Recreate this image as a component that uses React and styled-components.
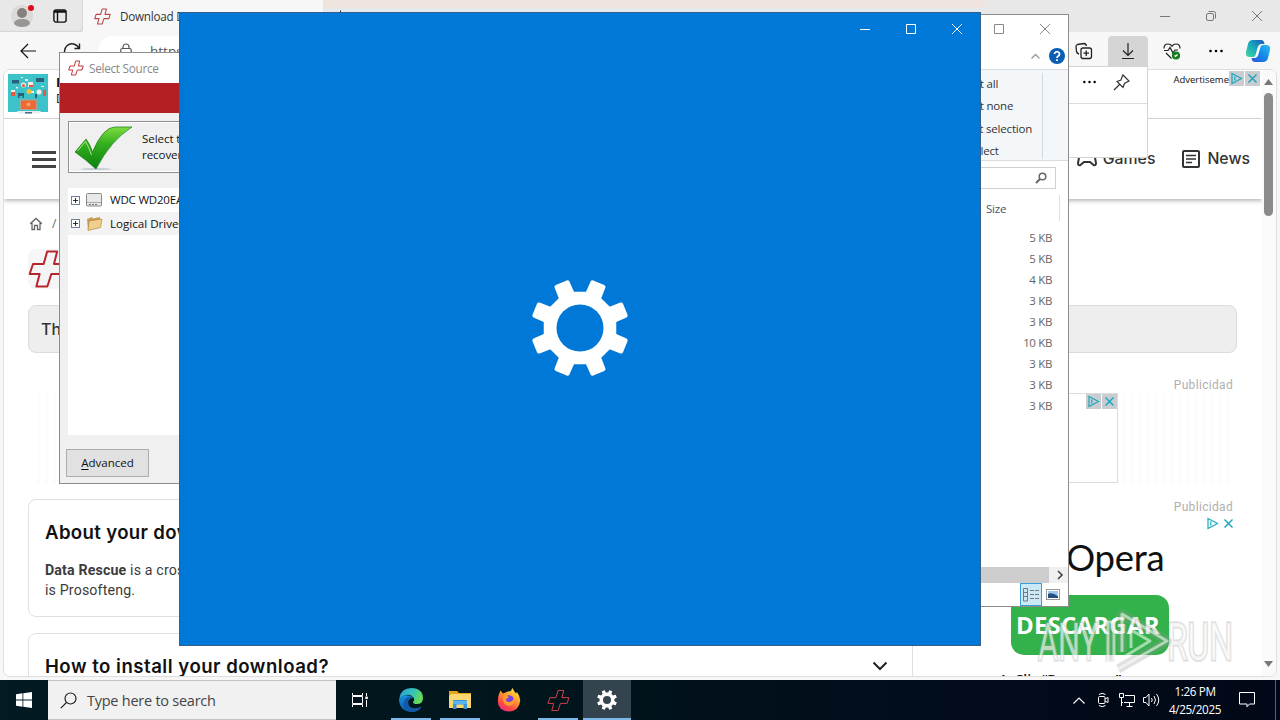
import React from "react";
import styled, { createGlobalStyle } from "styled-components";

const Global = createGlobalStyle`
  * { box-sizing: border-box; }
  body { margin: 0; font-family: "Open Sans", "Noto Sans", sans-serif; font-size: 12px; color: #111; }
  svg { display: block; flex: none; }
`;

const Desktop = styled.div`
  position: relative;
  width: 1280px;
  height: 720px;
  overflow: hidden;
  background: #f3f3f3;
`;

const Label = styled.span`
  flex: none;
  white-space: nowrap;
  font-family: ${(p) => p.$font || '"Open Sans"'}, sans-serif;
  font-size: ${(p) => p.$size || 12}px;
  line-height: ${(p) => p.$lh || 16}px;
  font-weight: ${(p) => p.$weight || 400};
  letter-spacing: ${(p) => p.$ls || 0}px;
  color: ${(p) => p.$color || "#111"};
  margin-left: ${(p) => p.$ml || 0}px;
`;

const Gap = styled.div`
  flex: ${(p) => (p.$w ? "none" : "1")};
  width: ${(p) => (p.$w ? p.$w + "px" : "auto")};
`;

/* ---------- Browser ---------- */
const Browser = styled.section`
  position: absolute;
  inset: 0 0 40px 0;
  display: flex;
  flex-direction: column;
  background: #f7f7f7;
`;
const TabStrip = styled.div`
  height: 32px;
  flex: none;
  display: flex;
  align-items: center;
  background: #e8e8e8;
`;
const StripLeft = styled.div`
  width: 83px;
  height: 32px;
  display: flex;
  align-items: center;
  padding-left: 11px;
  gap: 18px;
  border-bottom-right-radius: 4px;
  box-shadow: inset -1px -1px 1px #d5d5d5;
`;
const Tab = styled.div`
  width: 240px;
  height: 32px;
  display: flex;
  align-items: center;
  padding-left: 11px;
  gap: 9px;
  background: #f7f7f7;
`;
const StripFill = styled.div`
  width: 662px;
  height: 32px;
  display: flex;
  align-items: center;
  padding-left: 11px;
  background: linear-gradient(#efe4de 0 7px, #e4e9ee 9px 13px, #e8e8e8 14px);
`;
const CaptionButtons = styled.div`
  display: flex;
  width: ${(p) => p.$w || 138}px;
  svg { width: 46px; height: 16px; }
`;
const Toolbar = styled.div`
  height: 37px;
  flex: none;
  display: flex;
  align-items: flex-start;
  padding: 4px 0 0 18px;
`;
const ToolSlot = styled.div`
  flex: none;
  width: ${(p) => p.$w}px;
  height: 30px;
  display: flex;
  align-items: center;
  justify-content: center;
  border-radius: 4px 4px 0 0;
  background: ${(p) => (p.$active ? "#d5d5d5" : "transparent")};
`;
const AddressBar = styled.div`
  flex: 1;
  height: 30px;
  margin-left: 14px;
  display: flex;
  align-items: center;
  padding-left: 22px;
  gap: 18px;
  background: #fff;
  border-radius: 15px;
`;
const Viewport = styled.div`
  height: 608px;
  margin: 0 3px 0 3px;
  display: flex;
  border: 1px solid #dedede;
  border-radius: 7px;
  overflow: hidden;
  background: #fff;
`;
const PageBody = styled.main`
  width: 1258px;
  flex: none;
  display: flex;
  flex-direction: column;
`;
const AdBanner = styled.div`
  height: 49px;
  flex: none;
  display: flex;
  border-bottom: 1px solid #d8d8d8;
  padding: 4px 2px 0 4px;
`;
const BannerChoice = styled.div`
  margin-top: -3px;
`;
const AdText = styled.div`
  width: 330px;
  margin-left: 8px;
  display: flex;
  flex-direction: column;
`;
const SiteHeader = styled.header`
  height: 80px;
  flex: none;
  display: flex;
  align-items: center;
  padding: 0 12px 0 28px;
  box-shadow: 0 2px 4px rgba(0, 0, 0, 0.28);
`;
const Burger = styled.div`
  width: 24px;
  height: 17px;
  display: flex;
  flex-direction: column;
  justify-content: space-between;
  span { height: 3px; background: #444; }
`;
const Crumbs = styled.div`
  height: 16px;
  margin: 17px 0 0 26px;
  display: flex;
  align-items: center;
  gap: 10px;
`;
const AppLogo = styled.div`
  width: 40px;
  height: 40px;
  margin: 17px 0 0 24px;
  border-radius: 8px;
  background: #f6f6f6;
`;
const Notice = styled.div`
  width: 1209px;
  height: 48px;
  flex: none;
  margin: 16px 0 0 24px;
  padding: 0 12px;
  display: flex;
  align-items: center;
  border: 1px solid #dcdcdc;
  border-radius: 8px;
  background: #eee;
`;
const AdLabel = styled.div`
  width: 1229px;
  flex: none;
  display: flex;
  justify-content: flex-end;
  padding-top: 24px;
`;
const WideAd = styled.div`
  height: 90px;
  flex: none;
  display: flex;
  padding-left: 28px;
`;
const Stripes = styled.div`
  width: ${(p) => p.$w}px;
  background: repeating-linear-gradient(90deg, #fff 0 5px, #fcfcfc 5px 8px);
`;
const AdFrame = styled.div`
  width: 983px;
  margin-left: 4px;
  display: flex;
  justify-content: flex-end;
  border: 1px solid #dcdcdc;
`;
const Choice = styled.div`
  height: 15px;
  display: flex;
  gap: 1px;
  svg { width: 15px; height: 15px; background: ${(p) => (p.$plain ? "transparent" : "#c9ccd0")}; }
`;
const Columns = styled.div`
  display: flex;
  margin-top: 16px;
  padding-left: 24px;
`;
const LeftCol = styled.div`
  width: 885px;
  display: flex;
  flex-direction: column;
  gap: 16px;
`;
const Card = styled.article`
  height: 118px;
  padding: 20px 16px;
  border: 1px solid #e0e0e0;
  border-radius: 8px;
`;
const CardHead = styled.div`
  display: flex;
  align-items: center;
  justify-content: space-between;
  padding-right: 8px;
  height: 24px;
`;
const Paragraph = styled.div`
  display: flex;
  flex-direction: column;
  padding-top: 16px;
`;
const RightCol = styled.aside`
  width: 324px;
  display: flex;
  flex-direction: column;
`;
const AdLine = styled.div`
  width: ${(p) => p.$w || 320}px;
  display: flex;
  justify-content: flex-end;
`;
const ChoiceLine = styled(AdLine)`
  padding-top: 1px;
`;
const Brand = styled.div`
  height: 52px;
  padding: 0 0 0 153px;
`;
const Download = styled.div`
  width: 158px;
  height: 60px;
  margin: 12px 0 0 98px;
  padding-left: 5px;
  display: flex;
  align-items: center;
  border-radius: 13px;
  background: #33b14a;
`;
const Steps = styled.div`
  margin: 15px 0 0 86px;
`;
const Scrollbar = styled.div`
  width: 14px;
  flex: none;
  display: flex;
  flex-direction: column;
  align-items: center;
  padding: 9px 1px 9px 0;
  background: #fafafa;
`;
const Thumb = styled.div`
  width: 9px;
  height: 123px;
  margin: 8px 0 auto;
  border-radius: 5px;
  background: #8b8b8b;
`;
const Flyout = styled.div`
  position: absolute;
  left: 1040px;
  top: 66px;
  width: 108px;
  height: 92px;
  background: #fff;
  border: 1px solid #d4d4d4;
`;
const FlyoutHead = styled.div`
  height: 37px;
  display: flex;
  align-items: center;
  justify-content: flex-end;
  gap: 16px;
  padding-right: 17px;
  padding-bottom: 6px;
  border-bottom: 1px solid #ddd;
`;

/* ---------- Explorer ---------- */
const Explorer = styled.section`
  position: absolute;
  left: 900px;
  top: 14px;
  width: 169px;
  height: 593px;
  display: flex;
  flex-direction: column;
  border: 1px solid #8c8c8c;
  background: #fff;
`;
const ExTitle = styled.div`
  height: 28px;
  flex: none;
  display: flex;
  align-items: center;
  justify-content: flex-end;
`;
const ExMenu = styled.div`
  height: 26px;
  flex: none;
  display: flex;
  align-items: center;
  justify-content: flex-end;
  gap: 9px;
  padding-right: 3px;
`;
const Ribbon = styled.div`
  height: 92px;
  flex: none;
  display: flex;
  background: #f4f7fa;
  border-top: 1px solid #d9dde1;
  border-bottom: 1px solid #d9dde1;
`;
const RibbonGroup = styled.div`
  width: 142px;
  margin: 3px 0 1px;
  padding: 3px 0 0 52px;
  display: flex;
  flex-direction: column;
  justify-content: space-between;
  border-right: 1px solid #d3d9de;
`;
const SearchBox = styled.div`
  width: 155px;
  height: 22px;
  flex: none;
  margin-top: 6px;
  display: flex;
  align-items: center;
  justify-content: flex-end;
  padding-right: 8px;
  border: 1px solid #d0d0d0;
`;
const SizeHead = styled.div`
  width: 159px;
  height: 26px;
  flex: none;
  margin: 6px 0 6px;
  padding: 2px 0 0 85px;
  display: flex;
  align-items: center;
  border-right: 1px solid #e0e0e0;
`;
const SizeList = styled.div`
  flex: 1;
  display: flex;
  flex-direction: column;
  align-items: flex-end;
  padding-right: 16px;
`;
const ExScroll = styled.div`
  height: 16px;
  display: flex;
  background: #f0f0f0;
  div { width: 148px; background: #cdcdcd; }
  svg { margin: 3px 0 0 7px; }
`;
const ExStatus = styled.div`
  height: 23px;
  display: flex;
  justify-content: flex-end;
  padding-right: 5px;
`;
const ViewButton = styled.div`
  width: ${(p) => (p.$on ? 22 : 21)}px;
  height: 23px;
  display: flex;
  align-items: center;
  justify-content: center;
  border: 1px solid ${(p) => (p.$on ? "#3b9fd6" : "transparent")};
  background: ${(p) => (p.$on ? "#cbe8f7" : "transparent")};
`;

/* ---------- Select Source dialog ---------- */
const Dialog = styled.section`
  position: absolute;
  left: 59px;
  top: 52px;
  width: 300px;
  height: 432px;
  display: flex;
  flex-direction: column;
  border: 1px solid #8c8c8c;
  background: #f0f0f0;
`;
const DialogTitle = styled.div`
  height: 30px;
  flex: none;
  display: flex;
  align-items: center;
  gap: 5px;
  padding-left: 8px;
  background: #fff;
`;
const RedBand = styled.div`
  height: 30px;
  flex: none;
  background: #b41f24;
`;
const Instruction = styled.div`
  height: 52px;
  margin: 8px 0 0 8px;
  flex: none;
  display: flex;
  align-items: center;
  gap: 8px;
  padding-left: 6px;
  border: 1px solid #8f8f8f;
  box-shadow: inset 1px 1px 0 #fff, inset 0 -1px 0 #fff;
`;
const TwoLines = styled.div`
  display: flex;
  flex-direction: column;
`;
const Tree = styled.div`
  margin: 15px 0 0 8px;
  height: 247px;
  flex: none;
  background: #fff;
`;
const TreeRow = styled.div`
  height: ${(p) => (p.$alt ? 23 : 24)}px;
  display: flex;
  align-items: center;
  padding-left: 3px;
  background: ${(p) => (p.$alt ? "#f3f3f3" : "#fff")};
`;
const PushButton = styled.div`
  width: 83px;
  height: 28px;
  margin: 14px 0 0 6px;
  display: flex;
  align-items: center;
  justify-content: center;
  border: 1px solid #adadad;
  background: #e1e1e1;
  u { text-underline-offset: 2px; }
`;

/* ---------- Settings splash ---------- */
const Splash = styled.section`
  position: absolute;
  left: 179px;
  top: 12px;
  width: 802px;
  height: 634px;
  display: flex;
  flex-direction: column;
  border: 1px solid #35608c;
  background: #0078d7;
`;
const SplashTitle = styled.div`
  height: 32px;
  display: flex;
  align-items: center;
  justify-content: flex-end;
`;
const SplashBody = styled.div`
  flex: 1;
  display: flex;
  align-items: center;
  justify-content: center;
  padding-bottom: 34px;
`;
const Watermark = styled.svg`
  position: absolute;
  left: 1030px;
  top: 602px;
`;

/* ---------- Taskbar ---------- */
const Taskbar = styled.footer`
  position: absolute;
  left: 0;
  bottom: 0;
  width: 1280px;
  height: 40px;
  display: flex;
  background: linear-gradient(90deg, #021a21 0, #01151c 40%, #020d1b 70%, #020817);
`;
const StartSlot = styled.div`
  width: 48px;
  display: flex;
  align-items: center;
  justify-content: center;
`;
const TaskSearch = styled.div`
  width: 288px;
  display: flex;
  align-items: center;
  padding-left: 12px;
  gap: 10px;
  border: 1px solid #c4c4c4;
  border-width: 1px 0;
  background: #f1f1f1;
`;
const TaskSearchText = styled.div`
  padding-top: 2px;
`;
const TaskSlot = styled.div`
  width: 48px;
  margin-right: 1px;
  padding-bottom: ${(p) => (p.$run ? 0 : 2)}px;
  padding-top: 2px;
  display: flex;
  flex-direction: column;
  align-items: center;
  background: ${(p) => (p.$active ? "#34444e" : "transparent")};
`;
const TaskIcon = styled.div`
  flex: 1;
  display: flex;
  align-items: center;
`;
const Underline = styled.div`
  width: ${(p) => (p.$wide ? 48 : 40)}px;
  height: 2px;
  background: #7cb9ea;
`;
const Tray = styled.div`
  display: grid;
  grid-template-columns: repeat(4, 24px);
  align-items: center;
  justify-items: center;
`;
const Clock = styled.div`
  width: 64px;
  display: flex;
  flex-direction: column;
  align-items: center;
  padding-top: 2px;
`;
const Notif = styled.div`
  width: 49px;
  margin-right: 4px;
  padding-right: 9px;
  display: flex;
  align-items: center;
  justify-content: center;
  border-right: 1px solid #59616b;
`;

/* ---------- Icons ---------- */
const CROSS = "M11.5 1.5H17.5L15.6 9H22.8L21 15H14L11.6 22.5H5L7 15H1L3 9H9.4Z";
const Cross = ({ s = 24, c = "#c5353a", w = 1.2, fill = "none" }) => (
  <svg width={s} height={s} viewBox="0 0 24 24" fill={fill} stroke={c} strokeWidth={w} strokeLinejoin="round"><path d={CROSS} /></svg>
);
const Gear = ({ s, hole = 24 }) => (
  <svg width={s} height={s} viewBox="-50 -50 100 100">
    <defs>
      <mask id={"hole" + s}><rect x="-50" y="-50" width="100" height="100" fill="#fff" /><circle r={hole} fill="#000" /></mask>
    </defs>
    <g fill="#fff" mask={`url(#hole${s})`}>
      <path d="M-15-37H15L37-15V15L15 37H-15L-37 15V-15Z" />
      {[0, 1, 2, 3, 4, 5, 6, 7].map((i) => (
        <path key={i} transform={`rotate(${22.5 + 45 * i})`} d="M-8.6-30L-8.2-48Q-8-50-6-50H6Q8-50 8.2-48L8.6-30Z" />
      ))}
    </g>
  </svg>
);
const Min = ({ c, w = 10 }) => <svg viewBox="0 0 46 16" fill="none" stroke={c}><path d={`M${23 - w / 2} 8.5h${w}`} /></svg>;
const Max = ({ c }) => <svg viewBox="0 0 46 16" fill="none" stroke={c}><path d="M18.5 3.5h9v9h-9z" /></svg>;
const Close = ({ c }) => <svg viewBox="0 0 46 16" fill="none" stroke={c}><path d="M18 3l10 10M28 3L18 13" /></svg>;
const Restore = ({ c }) => (
  <svg viewBox="0 0 46 16" fill="none" stroke={c}><rect x="18.500" y="5.500" width="7" height="7" rx="1.500" /><path d="M20.500 3.500h5a2 2 0 0 1 2 2v5" /></svg>
);
const PlayMark = () => (
  <svg viewBox="0 0 15 15" fill="none" stroke="#1ba8bd" strokeWidth="1.200"><path d="M3 2.500L12.500 7.500L3 12.500ZM5.800 5.500v4" /></svg>
);
const XMark = () => <svg viewBox="0 0 15 15" fill="none" stroke="#1ba8bd" strokeWidth="1.500"><path d="M3.500 3.500l8 8M11.500 3.500l-8 8" /></svg>;
const Dots = ({ s = 16 }) => <svg width={s} height="4" viewBox="0 0 16 4"><circle cx="2.500" cy="2" r="1.300" /><circle cx="8" cy="2" r="1.300" /><circle cx="13.500" cy="2" r="1.300" /></svg>;
const Plus = () => (
  <svg width="9" height="9" viewBox="0 0 9 9" fill="#fff" stroke="#6f7fa0"><rect x=".5" y=".5" width="8" height="8" /><path stroke="#222c55" d="M2 4.500h5M4.500 2v5" /></svg>
);
const Thumbnail = () => (
  <svg width="40" height="40" viewBox="0 0 40 40">
    <rect width="40" height="38" fill="#3cc3c9" />
    <g fill="#2b6079"><rect x="4" y="6" width="7" height="3.500" /><rect x="28" y="4" width="8" height="4" /><path d="M10 19h6v5h-1.500v-2h-3v2H10z" /><rect x="27" y="20" width="2" height="4" /></g>
    <g fill="#f4efe2"><rect x="20" y="8" width="5" height="5" /><circle cx="15.500" cy="11" r="2.500" /><rect x="3" y="16" width="4" height="6" /><circle cx="31" cy="18" r="2.500" /><path d="M17 5h3v2h-3zM23 17h3v2h-3zM13 3h2v1h-2zM33 12h3v1h-3zM8 13h2v1.500H8z" /></g>
    <g fill="#e8573e"><circle cx="15.500" cy="11.500" r="1.500" /><rect x="3" y="18" width="4" height="4" /><rect x="35" y="16" width="3" height="6" /><rect x="21" y="11" width="4" height="2" /></g>
    <circle cx="21" cy="17.500" r="2.500" fill="#f5bf37" />
    <rect x="12" y="25.500" width="17" height="10.500" rx="1" fill="#b5a48f" /><rect x="13" y="26.500" width="15" height="8.500" fill="#ee6a35" /><circle cx="20.500" cy="30.500" r="2" fill="#f6a06f" />
    <path d="M9 37h24l-2 2.500H11z" fill="#e8ecee" /><path d="M17 38h7v1.500h-7z" fill="#456f8a" />
  </svg>
);
const Check = () => (
  <svg width="59" height="48" viewBox="0 0 59 48">
    <defs><linearGradient id="ck" x1="0" y1="0" x2="0" y2="1"><stop offset="0" stopColor="#7fdb3f" /><stop offset=".4" stopColor="#34b01f" /><stop offset="1" stopColor="#0a7f12" /></linearGradient></defs>
    <ellipse cx="21" cy="46" rx="15" ry="1" fill="#c4cdd4" />
    <path d="M0 29L11 16Q15 21 17.500 29Q28 4 40 4H57Q36 17 21 46Q10 36 0 29Z" fill="url(#ck)" stroke="#157c17" strokeWidth=".7" />
    <path d="M2.500 28L10.500 18.500Q13.500 23 16.500 32" fill="none" stroke="#a6e884" strokeWidth="1" />
  </svg>
);
const Copilot = () => (
  <svg width="26" height="24" viewBox="0 0 26 24">
    <defs>
      <linearGradient id="cpa" x1="0" y1="1" x2="1" y2="0"><stop offset="0" stopColor="#42d99c" /><stop offset=".5" stopColor="#18a7bd" /><stop offset="1" stopColor="#1758bd" /></linearGradient>
      <linearGradient id="cpb" x1="0" y1="1" x2="1" y2="0"><stop offset="0" stopColor="#2c56d8" /><stop offset=".5" stopColor="#1588ea" /><stop offset="1" stopColor="#2cc0f0" /></linearGradient>
    </defs>
    <path d="M8 1h8q3 0 3.500 4h-3q-3 0-4 4l-2 7q-.5 2-2.500 2H5q-5 0-4-5l2-8Q4 1 8 1z" fill="url(#cpa)" />
    <path d="M18 23h-8q-3 0-3.500-4h3q3 0 4-4l2-7q.5-2 2.500-2h3q5 0 4 5l-2 8q-1 4-5 4z" fill="url(#cpb)" />
  </svg>
);
const EdgeIcon = () => (
  <svg width="24" height="24" viewBox="0 0 24 24">
    <defs>
      <linearGradient id="e1" x1="0" y1="0" x2="1" y2=".4"><stop offset="0" stopColor="#269fe0" /><stop offset=".6" stopColor="#37c3b7" /><stop offset="1" stopColor="#68db55" /></linearGradient>
      <linearGradient id="e2" x1="0" y1="0" x2="0" y2="1"><stop offset="0" stopColor="#1b8edb" /><stop offset="1" stopColor="#0b5cb5" /></linearGradient>
    </defs>
    <path d="M.5 10Q2 0 12.500 0Q24 .5 24 10.500Q23.500 16 18 16Q14 16 14 14Q16 12 14.500 9.500Q12 6 7 7Q2 8 .5 12Z" fill="url(#e1)" />
    <path d="M0 12Q1 7.500 6.500 7.200Q12 7 14.500 10Q10 9.500 9 14Q9 20 16 20.500Q19.500 20.500 22.500 18.500Q19 24 12.500 24Q1 23.500 0 12Z" fill="url(#e2)" />
    <path d="M5 20Q3 10 11 8.500Q14 9 14.500 10Q9.500 9 9 14Q9 20 16 20.500Q19.500 20.500 22.500 18.500Q20 23.500 13 24Q8 23.500 5 20Z" fill="#1259a6" />
  </svg>
);
const FolderIcon = () => (
  <svg width="22" height="20" viewBox="0 0 22 20">
    <path d="M0 1h8l2 2h12v15H0z" fill="#e8a317" /><path d="M2 4h20v14H0V6z" fill="#fbd670" />
    <path d="M4 19v-8q0-1 1-1h12q1 0 1 1v8h-3.500v-4.500h-7V19z" fill="#3a95d8" /><path d="M4 11h14v3H4z" fill="#59b5ee" />
  </svg>
);
const Firefox = () => (
  <svg width="24" height="24" viewBox="0 0 24 24">
    <defs><linearGradient id="ff" x1=".8" y1="0" x2=".2" y2="1"><stop offset="0" stopColor="#fff04a" /><stop offset=".4" stopColor="#ff9b28" /><stop offset=".75" stopColor="#ff4548" /><stop offset="1" stopColor="#e92a8c" /></linearGradient></defs>
    <path d="M2 6L3.500 2.500L6 5.500L8.500 4.500Q12 3 14 3Q14.500 1 15.500 0Q17 3.500 19 5.500L20 4Q23.500 9 23.200 13Q22 23 12 23.500Q1 23 .8 13Q.8 9 2 6Z" fill="url(#ff)" />
    <circle cx="12" cy="12.500" r="5.200" fill="#7542e5" />
    <path d="M6 7Q10 6 12 9.500L9 11Q9 14.500 13 14Q17 13 16.500 9Q19 13 16.500 16Q12 20 7.500 16Q5 12 6 7Z" fill="#ff9a2b" />
  </svg>
);

const sizes = ["5 KB", "5 KB", "4 KB", "3 KB", "3 KB", "10 KB", "3 KB", "3 KB", "3 KB"];
const Publicidad = () => <Label $color="#b0b0b0" $font="Roboto" $size={12} $ls={0.32}>Publicidad</Label>;

const BrowserWindow = () => (
  <Browser>
    <TabStrip>
      <StripLeft>
        <svg width="24" height="24" viewBox="0 0 24 24"><circle cx="11" cy="12" r="11" fill="#dcdad8" /><circle cx="11" cy="9" r="5" fill="#85817f" /><path d="M3 20q0-5 8-5t8 5q-3 3-8 3t-8-3z" fill="#999593" /><circle cx="20" cy="4" r="3" fill="#e00b1c" /></svg>
        <svg width="14" height="14" viewBox="0 0 14 14" fill="none" stroke="#111" strokeWidth="1.400"><rect x=".9" y=".9" width="12.200" height="12.200" rx="2" /><path strokeWidth="2.500" d="M1 2.500h12" /><path d="M4.500 3v10" /></svg>
      </StripLeft>
      <Tab><Cross s={17} w={1.5} c="#b5484b" /><Label $ls={-0.25} $color="#333" $size={11.7}>Download Data Rescue 6.0.6</Label></Tab>
      <StripFill><svg width="13" height="13" viewBox="0 0 13 13" stroke="#222"><path d="M.5 6.500h12M6.500.5v12" /></svg></StripFill>
      <Gap />
      <CaptionButtons><Min c="#777" /><Restore c="#777" /><Close c="#777" /></CaptionButtons>
    </TabStrip>
    <Toolbar>
      <ToolSlot $w={20}><svg width="18" height="16" viewBox="0 0 18 16" fill="none" stroke="#111" strokeWidth="1.200"><path d="M17 8H2M9 1L2 8l7 7" /></svg></ToolSlot>
      <Gap $w={22} />
      <ToolSlot $w={24}><svg width="18" height="18" viewBox="0 0 18 18" fill="none" stroke="#222" strokeWidth="1.400"><path d="M16 6.500A7.500 7.500 0 1 0 16.500 10M16.500 1.500v5h-5" /></svg></ToolSlot>
      <AddressBar>
        <svg width="12" height="16" viewBox="0 0 12 16" fill="none" stroke="#555" strokeWidth="1.200"><rect x=".8" y="5.500" width="10.400" height="9.500" rx="1.500" /><path d="M3 5.500V4a3 3 0 0 1 6 0v1.500" /><circle cx="6" cy="10" r=".5" /></svg>
        <Label $size={13.5} $color="#555">https://</Label>
      </AddressBar>
      <ToolSlot $w={48}><svg width="18" height="18" viewBox="0 0 18 18" fill="none" stroke="#222" strokeWidth="1.300"><rect x="6" y="6" width="10.500" height="10.500" rx="2" /><path d="M11.200 8.500v5.500M8.500 11.200H14M4 12Q2 11.500 1.500 9.500L1 4.500Q1 3 2.500 2.500L9 1.500Q11 1.500 11.500 4" /></svg></ToolSlot>
      <ToolSlot $w={40} $active><svg width="14" height="18" viewBox="0 0 14 18" fill="none" stroke="#222" strokeWidth="1.200"><path d="M7 1v12M2 8.500l5 5 5-5M1 16.500h12" /></svg></ToolSlot>
      <ToolSlot $w={48}><svg width="18" height="18" viewBox="0 0 18 18" fill="none" stroke="#222" strokeWidth="1.200"><path d="M1 6.500Q1 2 5 2q2.500 0 4 2.200Q10.500 2 13 2q4 0 4 4.500M1 8.500h4l2-3 3 5.500 2-3h3M3 11l5.500 5.500" /><circle cx="13" cy="13.500" r="3.500" fill="#14801b" stroke="#14801b" /><path stroke="#fff" d="M11.500 13.500l1 1 2-2" /></svg></ToolSlot>
      <ToolSlot $w={40}><Dots /></ToolSlot>
      <ToolSlot $w={44}><Copilot /></ToolSlot>
    </Toolbar>
    <Viewport>
      <PageBody>
        <AdBanner>
          <Thumbnail />
          <AdText>
            <Label $weight={700} $size={13}>Data Rescue</Label>
            <Label $size={12} $lh={17}>Download</Label>
          </AdText>
          <Gap />
          <Label $size={9.5} $lh={12}>Advertiseme</Label>
          <BannerChoice><Choice><PlayMark /><XMark /></Choice></BannerChoice>
        </AdBanner>
        <SiteHeader>
          <Burger><span /><span /><span /></Burger>
          <Gap />
          <svg width="20" height="16" viewBox="0 0 20 16" fill="none" stroke="#333" strokeWidth="2"><path d="M5 2h10q2 0 2.500 2L19 12q0 3-2.500 2L13 11H7l-3.500 3Q1 15 1 12L2.500 4Q3 2 5 2z" /></svg>
          <Label $font="Inter" $size={15.8} $ml={6} $lh={20} $color="#333" $weight={450}>Games</Label>
          <Gap $w={27} />
          <svg width="18" height="18" viewBox="0 0 18 18" fill="none" stroke="#333" strokeWidth="2"><rect x="1" y="1" width="16" height="16" rx="1" /><path strokeWidth="1.700" d="M4 5.500h10M4 9h10M4 12.500h6" /></svg>
          <Label $font="Inter" $size={15.8} $ml={7} $lh={20} $color="#333" $weight={450}>News</Label>
        </SiteHeader>
        <Crumbs>
          <svg width="12" height="14" viewBox="0 0 12 14" fill="none" stroke="#666" strokeWidth="1.300"><path d="M0 7l6-5.500L12 7M2 6v6.500h2.500V8.500h3v4H10V6" /></svg>
          <Label $color="#666">/</Label>
        </Crumbs>
        <AppLogo><Cross s={40} c="#b5262c" w={1.2} fill="#f4f4f4" /></AppLogo>
        <Notice><Label $font="Inter" $size={16} $weight={500} $color="#333">This</Label></Notice>
        <AdLabel><Publicidad /></AdLabel>
        <WideAd>
          <Stripes $w={99} />
          <AdFrame><Choice><PlayMark /><XMark /></Choice></AdFrame>
          <Stripes $w={115} />
        </WideAd>
        <Columns>
          <LeftCol>
            <Card>
              <CardHead><Label $font="Inter" $size={18.6} $lh={24} $weight={600} $ls={0.35}>About your download</Label></CardHead>
              <Paragraph>
                <Label $font="Roboto" $size={14.2} $lh={20} $color="#3c3c3c" $ls={0.15}><b>Data Rescue</b> is a cross-platform</Label>
                <Label $font="Roboto" $size={14.2} $lh={20} $color="#3c3c3c" $ls={0.15}>is Prosofteng.</Label>
              </Paragraph>
            </Card>
            <Card>
              <CardHead>
                <Label $font="Inter" $size={18.6} $lh={24} $weight={600} $ls={0.5}>How to install your download?</Label>
                <svg width="16" height="10" viewBox="0 0 16 10" fill="none" stroke="#222" strokeWidth="2"><path d="M1.500 1.500L8 8l6.500-6.500" /></svg>
              </CardHead>
            </Card>
          </LeftCol>
          <RightCol>
            <AdLine><Publicidad /></AdLine>
            <ChoiceLine $w={323}><Choice $plain><PlayMark /><XMark /></Choice></ChoiceLine>
            <Brand><Label $font="Lato" $size={36.5} $lh={52} $ls={-0.3}>Opera</Label></Brand>
            <Download><Label $size={24} $lh={30} $weight={700} $ls={0.2} $color="#fff">DESCARGAR</Label></Download>
            <Steps><Label $size={14} $lh={20} $weight={600}>1. Clic “Descargar”</Label></Steps>
          </RightCol>
        </Columns>
      </PageBody>
      <Scrollbar>
        <svg width="9" height="6" viewBox="0 0 9 6" fill="#777"><path d="M0 6L4.500 0L9 6z" /></svg>
        <Thumb />
        <svg width="9" height="6" viewBox="0 0 9 6" fill="#777"><path d="M0 0h9L4.500 6z" /></svg>
      </Scrollbar>
    </Viewport>
    <Flyout>
      <FlyoutHead>
        <Dots s={15} />
        <svg width="17" height="17" viewBox="0 0 17 17" fill="none" stroke="#333" strokeWidth="1.200"><path d="M10 1l6 6-2 1-2.500 1.500-1.500 4-6-6 4-1.500L9 3zM6.500 10.500L1 16" /></svg>
      </FlyoutHead>
    </Flyout>
  </Browser>
);

const ExplorerWindow = () => (
  <Explorer>
    <ExTitle><CaptionButtons $w={92}><Max c="#888" /><Close c="#888" /></CaptionButtons></ExTitle>
    <ExMenu>
      <svg width="9" height="6" viewBox="0 0 9 6" fill="none" stroke="#999" strokeWidth="1.300"><path d="M.5 5.500l4-4 4 4" /></svg>
      <svg width="16" height="16" viewBox="0 0 16 16"><circle cx="8" cy="8" r="8" fill="#0b5db6" /><path d="M5.500 6a2.500 2.300 0 1 1 3.800 2Q8 8.700 8 10M8 11.200v1.800" fill="none" stroke="#fff" strokeWidth="1.800" /></svg>
    </ExMenu>
    <Ribbon>
      <RibbonGroup>
        {["Select all", "Select none", "Invert selection", "Select"].map((t, i) => <Label key={i} $size={11.5} $ls={-0.18} $ml={i === 3 ? 15 : 0} $color="#333">{t}</Label>)}
      </RibbonGroup>
    </Ribbon>
    <SearchBox><svg width="12" height="12" viewBox="0 0 12 12" fill="none" stroke="#666" strokeWidth="1.500"><circle cx="7.500" cy="4.500" r="3.300" /><path strokeWidth="2" d="M5 7L1 11" /></svg></SearchBox>
    <SizeHead><Label $size={11.5} $ls={-0.2} $color="#44546a">Size</Label></SizeHead>
    <SizeList>{sizes.map((t, i) => <Label key={i} $size={11.5} $lh={21} $ls={-0.35} $color="#666">{t}</Label>)}</SizeList>
    <ExScroll><div /><svg width="8" height="10" viewBox="0 0 8 10" fill="none" stroke="#444" strokeWidth="1.600"><path d="M2 1l4 4-4 4" /></svg></ExScroll>
    <ExStatus>
      <ViewButton $on><svg width="16" height="14" viewBox="0 0 16 14" fill="none" stroke="#777"><path d="M.5.5h4v12.500h-4zM.5 4.500h4M.5 8.500h4M7 2.500h4M12 2.500h4M7 6.500h4M12 6.500h4M7 10.500h4M12 10.500h4" /></svg></ViewButton>
      <ViewButton><svg width="14" height="11" viewBox="0 0 14 11"><rect x=".5" y=".5" width="13" height="10" fill="#fff" stroke="#999" /><path d="M2 2h10v4H2z" fill="#9cc8f0" /><path d="M2 5q4-2 10 2v2H2z" fill="#24507c" /></svg></ViewButton>
    </ExStatus>
  </Explorer>
);

const SourceDialog = () => (
  <Dialog>
    <DialogTitle><Cross s={16} w={1.5} /><Label $color="#888" $size={11.8} $ls={-0.3}>Select Source</Label></DialogTitle>
    <RedBand />
    <Instruction>
      <Check />
      <TwoLines><Label $size={11.5} $ls={-0.05}>Select the location to</Label><Label $size={11.5} $ls={-0.05}>recover data from</Label></TwoLines>
    </Instruction>
    <Tree>
      <TreeRow>
        <Plus /><Gap $w={6} />
        <svg width="16" height="14" viewBox="0 0 16 14"><rect x=".5" y=".5" width="15" height="12.500" rx="1" fill="#e8e8e8" stroke="#888" /><path d="M1 9.500h14" stroke="#aaa" /><path d="M3 11.500h8" stroke="#777" strokeDasharray="2 1" /></svg>
        <Label $ml={8} $size={11.5} $ls={-0.2}>WDC WD20EARS</Label>
      </TreeRow>
      <TreeRow $alt>
        <Plus /><Gap $w={6} />
        <svg width="17" height="15" viewBox="0 0 17 15"><path d="M1 3l5-2 1 1.500L14 1v10L2 14z" fill="#c99a50" /><path d="M3 5l13-2-1.500 8.500L2 14.500z" fill="#f0cf8d" stroke="#b58a45" strokeWidth=".7" /></svg>
        <Label $ml={7} $size={11.6}>Logical Drives</Label>
      </TreeRow>
    </Tree>
    <PushButton><Label $size={11.5}><u>A</u>dvanced</Label></PushButton>
  </Dialog>
);

const SettingsSplash = () => (
  <Splash>
    <SplashTitle><CaptionButtons><Min c="#fff" /><Max c="#fff" /><Close c="#fff" /></CaptionButtons></SplashTitle>
    <SplashBody><Gear s={98} /></SplashBody>
  </Splash>
);

const AnyRun = () => (
  <Watermark width="214" height="78" viewBox="0 0 214 78">
    <g fill="#fff" fillOpacity=".6" stroke="#a8a8a8" strokeOpacity=".38" strokeWidth="3" paintOrder="stroke" fontFamily="Roboto, sans-serif" fontSize="51">
      <text x="8" y="58" textLength="60" lengthAdjust="spacingAndGlyphs">ANY</text>
      <text x="137" y="58" textLength="66" lengthAdjust="spacingAndGlyphs">RUN</text>
    </g>
    <g fill="none" strokeLinejoin="round">
      <path d="M80 20V60M92 50V12L137 39L88 67" stroke="#999" strokeOpacity=".3" strokeWidth="9" />
      <path d="M92 50V12L137 39L88 67L84 61L120 39L101 28V46M78 20V60H84V20Z" stroke="#fff" strokeOpacity=".55" strokeWidth="3" />
    </g>
  </Watermark>
);

const Task = ({ children, run, active }) => (
  <TaskSlot $run={run} $active={active}><TaskIcon>{children}</TaskIcon>{run && <Underline $wide={active} />}</TaskSlot>
);

const TaskbarRow = () => (
  <Taskbar>
    <StartSlot><svg width="16" height="16" viewBox="0 0 16 16" fill="#fff"><path d="M0 2.300L6.500 1.300V7.600H0zM7.300 1.200L16 0V7.600H7.300zM0 8.400H6.500V14.700L0 13.700zM7.300 8.400H16V16L7.300 14.800z" /></svg></StartSlot>
    <TaskSearch>
      <svg width="17" height="17" viewBox="0 0 17 17" fill="none" stroke="#222" strokeWidth="1.200"><circle cx="10.500" cy="6.500" r="5.500" /><path d="M6.500 10.500L.8 16.200" /></svg>
      <TaskSearchText><Label $size={14.5} $lh={20} $ls={-0.25} $color="#444">Type here to search</Label></TaskSearchText>
    </TaskSearch>
    <Task><svg width="16" height="16" viewBox="0 0 16 16" fill="none" stroke="#fff"><path d="M.5 1v2.500h10V1M.5 15v-2.500h10V15M.5 4.500h10v7H.5zM14.500 1v3M14.500 8v7" /><path strokeWidth="2.500" d="M13.300 5.800h2.500" /></svg></Task>
    <Gap $w={2} />
    <Task run><EdgeIcon /></Task>
    <Task run><FolderIcon /></Task>
    <Task><Firefox /></Task>
    <Task run><Cross s={23} w={1} c="#d5454b" /></Task>
    <Task run active><Gear s={20} hole={20} /></Task>
    <Gap />
    <Tray>
      <svg width="12" height="7" viewBox="0 0 12 7" fill="none" stroke="#fff" strokeWidth="1.200"><path d="M.5 6.500L6 1l5.500 5.500" /></svg>
      <svg width="12" height="16" viewBox="0 0 12 16" fill="none" stroke="#fff"><rect x="1.500" y="4.500" width="6.500" height="7" rx="1" /><path d="M8 7l3-1.500v5L8 9M2 2.500Q5 0 8.500 2.500M2 13.500Q5 16 8.500 13.500" /></svg>
      <svg width="16" height="14" viewBox="0 0 16 14" fill="none" stroke="#fff"><path d="M6 2.500h9.500v7H5M10.500 10v3M7.500 13.500h6M.5.500h4v4h-4zM2.500 5v8M2 9.500h2" /></svg>
      <svg width="17" height="14" viewBox="0 0 17 14" fill="none" stroke="#fff"><path d="M.5 4.500h2.500l3-3.500v12l-3-3.500H.5zM8.500 5q1.500 2 0 4M11 3q3 4 0 8M13.500 1q4.500 6 0 12" /></svg>
    </Tray>
    <Clock>
      <Label $size={11.7} $lh={18} $ls={-0.35} $color="#fff">1:26 PM</Label>
      <Label $size={11.7} $lh={18} $ls={-0.35} $color="#fff">4/25/2025</Label>
    </Clock>
    <Notif><svg width="16" height="16" viewBox="0 0 16 16" fill="none" stroke="#fff"><path d="M.5.500h15v11.500H10.500L8 14.800V12H.5z" /></svg></Notif>
  </Taskbar>
);

export default function App() {
  return (
    <>
      <Global />
      <Desktop>
        <BrowserWindow />
        <ExplorerWindow />
        <SourceDialog />
        <SettingsSplash />
        <AnyRun />
        <TaskbarRow />
      </Desktop>
    </>
  );
}
